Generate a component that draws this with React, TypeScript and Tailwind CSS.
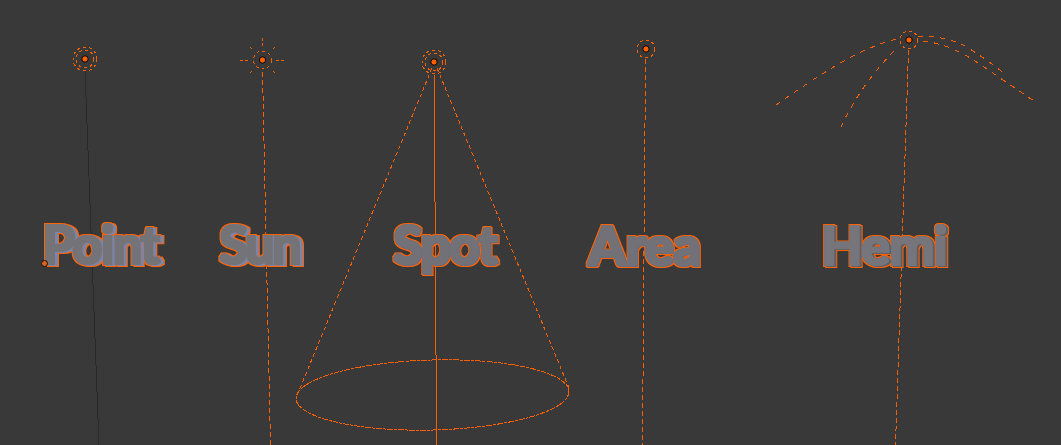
const O = "#fa6000";

function Lamp({ cx, cy, outer, inner }: { cx: number; cy: number; outer?: number; inner: number }) {
  return (
    <g>
      {outer ? <circle cx={cx} cy={cy} r={outer} fill="none" stroke={O} strokeDasharray="3 3" /> : null}
      <circle cx={cx} cy={cy} r={inner} fill="none" stroke={O} strokeDasharray="3 3" />
      <circle cx={cx} cy={cy} r={3.2} fill={O} stroke="#000" strokeWidth={1} shapeRendering="auto" />
    </g>
  );
}

function Extrude({ id, dx, dy, side, face }: { id: string; dx: number; dy: number; side: string; face: string }) {
  return (
    <filter id={id} x="-10%" y="-15%" width="120%" height="130%" colorInterpolationFilters="sRGB">
      <feOffset in="SourceAlpha" dx={dx} dy={dy} result="shifted" />
      <feMerge result="union">
        <feMergeNode in="SourceAlpha" />
        <feMergeNode in="shifted" />
      </feMerge>
      <feMorphology in="union" operator="dilate" radius={1} result="body" />
      <feMorphology in="union" operator="dilate" radius={2} result="outer" />
      <feFlood floodColor="#ff6200" />
      <feComposite in2="outer" operator="in" result="rim" />
      <feFlood floodColor={side} />
      <feComposite in2="body" operator="in" result="sideFill" />
      <feMorphology in="SourceAlpha" operator="dilate" radius={0.6} result="front" />
      <feFlood floodColor={face} />
      <feComposite in2="front" operator="in" result="faceFill" />
      <feMerge>
        <feMergeNode in="rim" />
        <feMergeNode in="sideFill" />
        <feMergeNode in="faceFill" />
      </feMerge>
    </filter>
  );
}

const labelBase = "absolute leading-none font-black text-[#74747c] [font-family:Lato,sans-serif]";

export default function App() {
  return (
    <div className="relative w-[1061px] h-[445px] overflow-hidden bg-[#393939]">
      <svg className="absolute inset-0" width={1061} height={445} shapeRendering="crispEdges">
        <defs>
          <Extrude id="extrudeStrong" dx={3} dy={1} side="#7f84a6" face="#737378" />
          <Extrude id="extrudeSoft" dx={1} dy={1} side="#6b6b80" face="#717177" />
          <Extrude id="extrudeHemi" dx={2} dy={1} side="#5f5f68" face="#75757b" />
        </defs>

        <line x1={85} y1={70} x2={99} y2={445} stroke="#2a2a2a" />
        <Lamp cx={85} cy={59} outer={12} inner={9} />

        <line x1={262.5} y1={72} x2={270.5} y2={445} stroke={O} strokeDasharray="5 3" />
        <Lamp cx={262.5} cy={60} inner={9} />
        <g stroke={O} strokeDasharray="3 2" fill="none">
          <line x1={262.5} y1={38} x2={262.5} y2={47} />
          <line x1={240} y1={60.5} x2={249} y2={60.5} />
          <line x1={276} y1={60.5} x2={285} y2={60.5} />
          <line x1={250} y1={47} x2={252} y2={49} strokeDasharray="none" />
          <line x1={275} y1={47} x2={273} y2={49} strokeDasharray="none" />
          <line x1={250} y1={73} x2={252} y2={71} strokeDasharray="none" />
          <line x1={275} y1={73} x2={273} y2={71} strokeDasharray="none" />
        </g>

        <line x1={434.18} y1={75} x2={436.6} y2={445} stroke={O} />
        <line x1={432} y1={68} x2={296} y2={398} stroke={O} strokeDasharray="4 3" />
        <line x1={437} y1={68} x2={569} y2={388} stroke={O} strokeDasharray="4 3" />
        <ellipse
          cx={432.5}
          cy={395}
          rx={136.5}
          ry={35}
          transform="rotate(-1.5 432.5 395)"
          fill="none"
          stroke={O}
          strokeDasharray="6 1 3 1"
        />
        <Lamp cx={434} cy={62} outer={12} inner={9} />

        <line x1={645.5} y1={59} x2={642.5} y2={445} stroke={O} strokeDasharray="5 3" />
        <Lamp cx={646} cy={49} inner={9} />

        <line x1={908.5} y1={50} x2={895.5} y2={445} stroke={O} strokeDasharray="5 3" />
        <g fill="none" stroke={O} strokeDasharray="5 6">
          <path d="M776 105 Q840 60 870 48 T897 41" />
          <path d="M841 127 Q860 85 898 47" />
          <path d="M918 36 Q950 36 970 49 T1005 74" />
          <path d="M923 41 Q950 44 978 63 T1037 103" />
        </g>
        <Lamp cx={909} cy={40} inner={9} />
      </svg>

      <div className={labelBase + " left-[42px] top-[217px] text-[53px] tracking-[-2px] [filter:url(#extrudeStrong)]"}>Point</div>
      <div className={labelBase + " left-[219px] top-[217px] text-[53px] tracking-[-3px] [filter:url(#extrudeStrong)]"}>Sun</div>
      <div className={labelBase + " left-[393px] top-[217px] text-[53px] tracking-[-1.5px] [filter:url(#extrudeSoft)]"}>Spot</div>
      <div className={labelBase + " left-[588px] top-[218px] text-[54px] tracking-[-0.5px] [filter:url(#extrudeSoft)]"}>Area</div>
      <div className={labelBase + " left-[821px] top-[218px] text-[54px] tracking-[-1px] [filter:url(#extrudeHemi)]"}>Hemi</div>

      <div className="absolute left-[41px] top-[260px] w-[7px] h-[7px] rounded-full bg-[#dd6218] border border-[#111]" />
    </div>
  );
}
